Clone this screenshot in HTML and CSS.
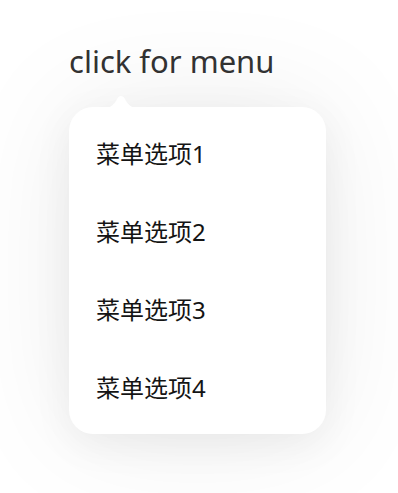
FILE: index.html
```html
<!DOCTYPE html>
<html lang="zh">
<head>
<meta charset="utf-8">
<link rel="stylesheet" href="styles.css">
</head>
<body>
<div class="page">
  <div class="title">click for menu</div>
  <div class="menu-wrap">
    <svg class="arrow" width="44" height="14" viewBox="0 0 44 14" aria-hidden="true">
      <path d="M0 14 C11 14 15 10 18 4 C20 0 24 0 26 4 C29 10 33 14 44 14 Z" fill="#ffffff"/>
    </svg>
    <div class="menu">
      <div class="item">菜单选项1</div>
      <div class="item">菜单选项2</div>
      <div class="item">菜单选项3</div>
      <div class="item">菜单选项4</div>
    </div>
  </div>
</div>
</body>
</html>
```
FILE: styles.css
```css
html, body {
  margin: 0;
  padding: 0;
  background: #ffffff;
}
body {
  width: 398px;
  height: 493px;
  overflow: hidden;
}
.page {
  padding: 40px 0 0 69px;
  display: flex;
  flex-direction: column;
}
.title {
  font-family: "Noto Sans", "Noto Sans CJK SC", sans-serif;
  font-size: 31px;
  line-height: 42px;
  color: #333333;
  height: 42px;
}
.menu-wrap {
  position: relative;
  margin-top: 25px;
  width: 257px;
}
.arrow {
  position: absolute;
  left: 30px;
  top: -12px;
}
.menu {
  width: 257px;
  height: 327px;
  box-sizing: border-box;
  padding: 6px 0 8px 27px;
  background: #ffffff;
  border-radius: 24px;
  box-shadow: 0 10px 40px rgba(0, 0, 0, 0.06), 0 0 120px rgba(0, 0, 0, 0.08);
  display: flex;
  flex-direction: column;
}
.item {
  height: 78px;
  display: flex;
  align-items: center;
  font-family: "Noto Sans", "Noto Sans CJK SC", sans-serif;
  font-size: 24px;
  font-weight: 400;
  color: #141414;
}
```
